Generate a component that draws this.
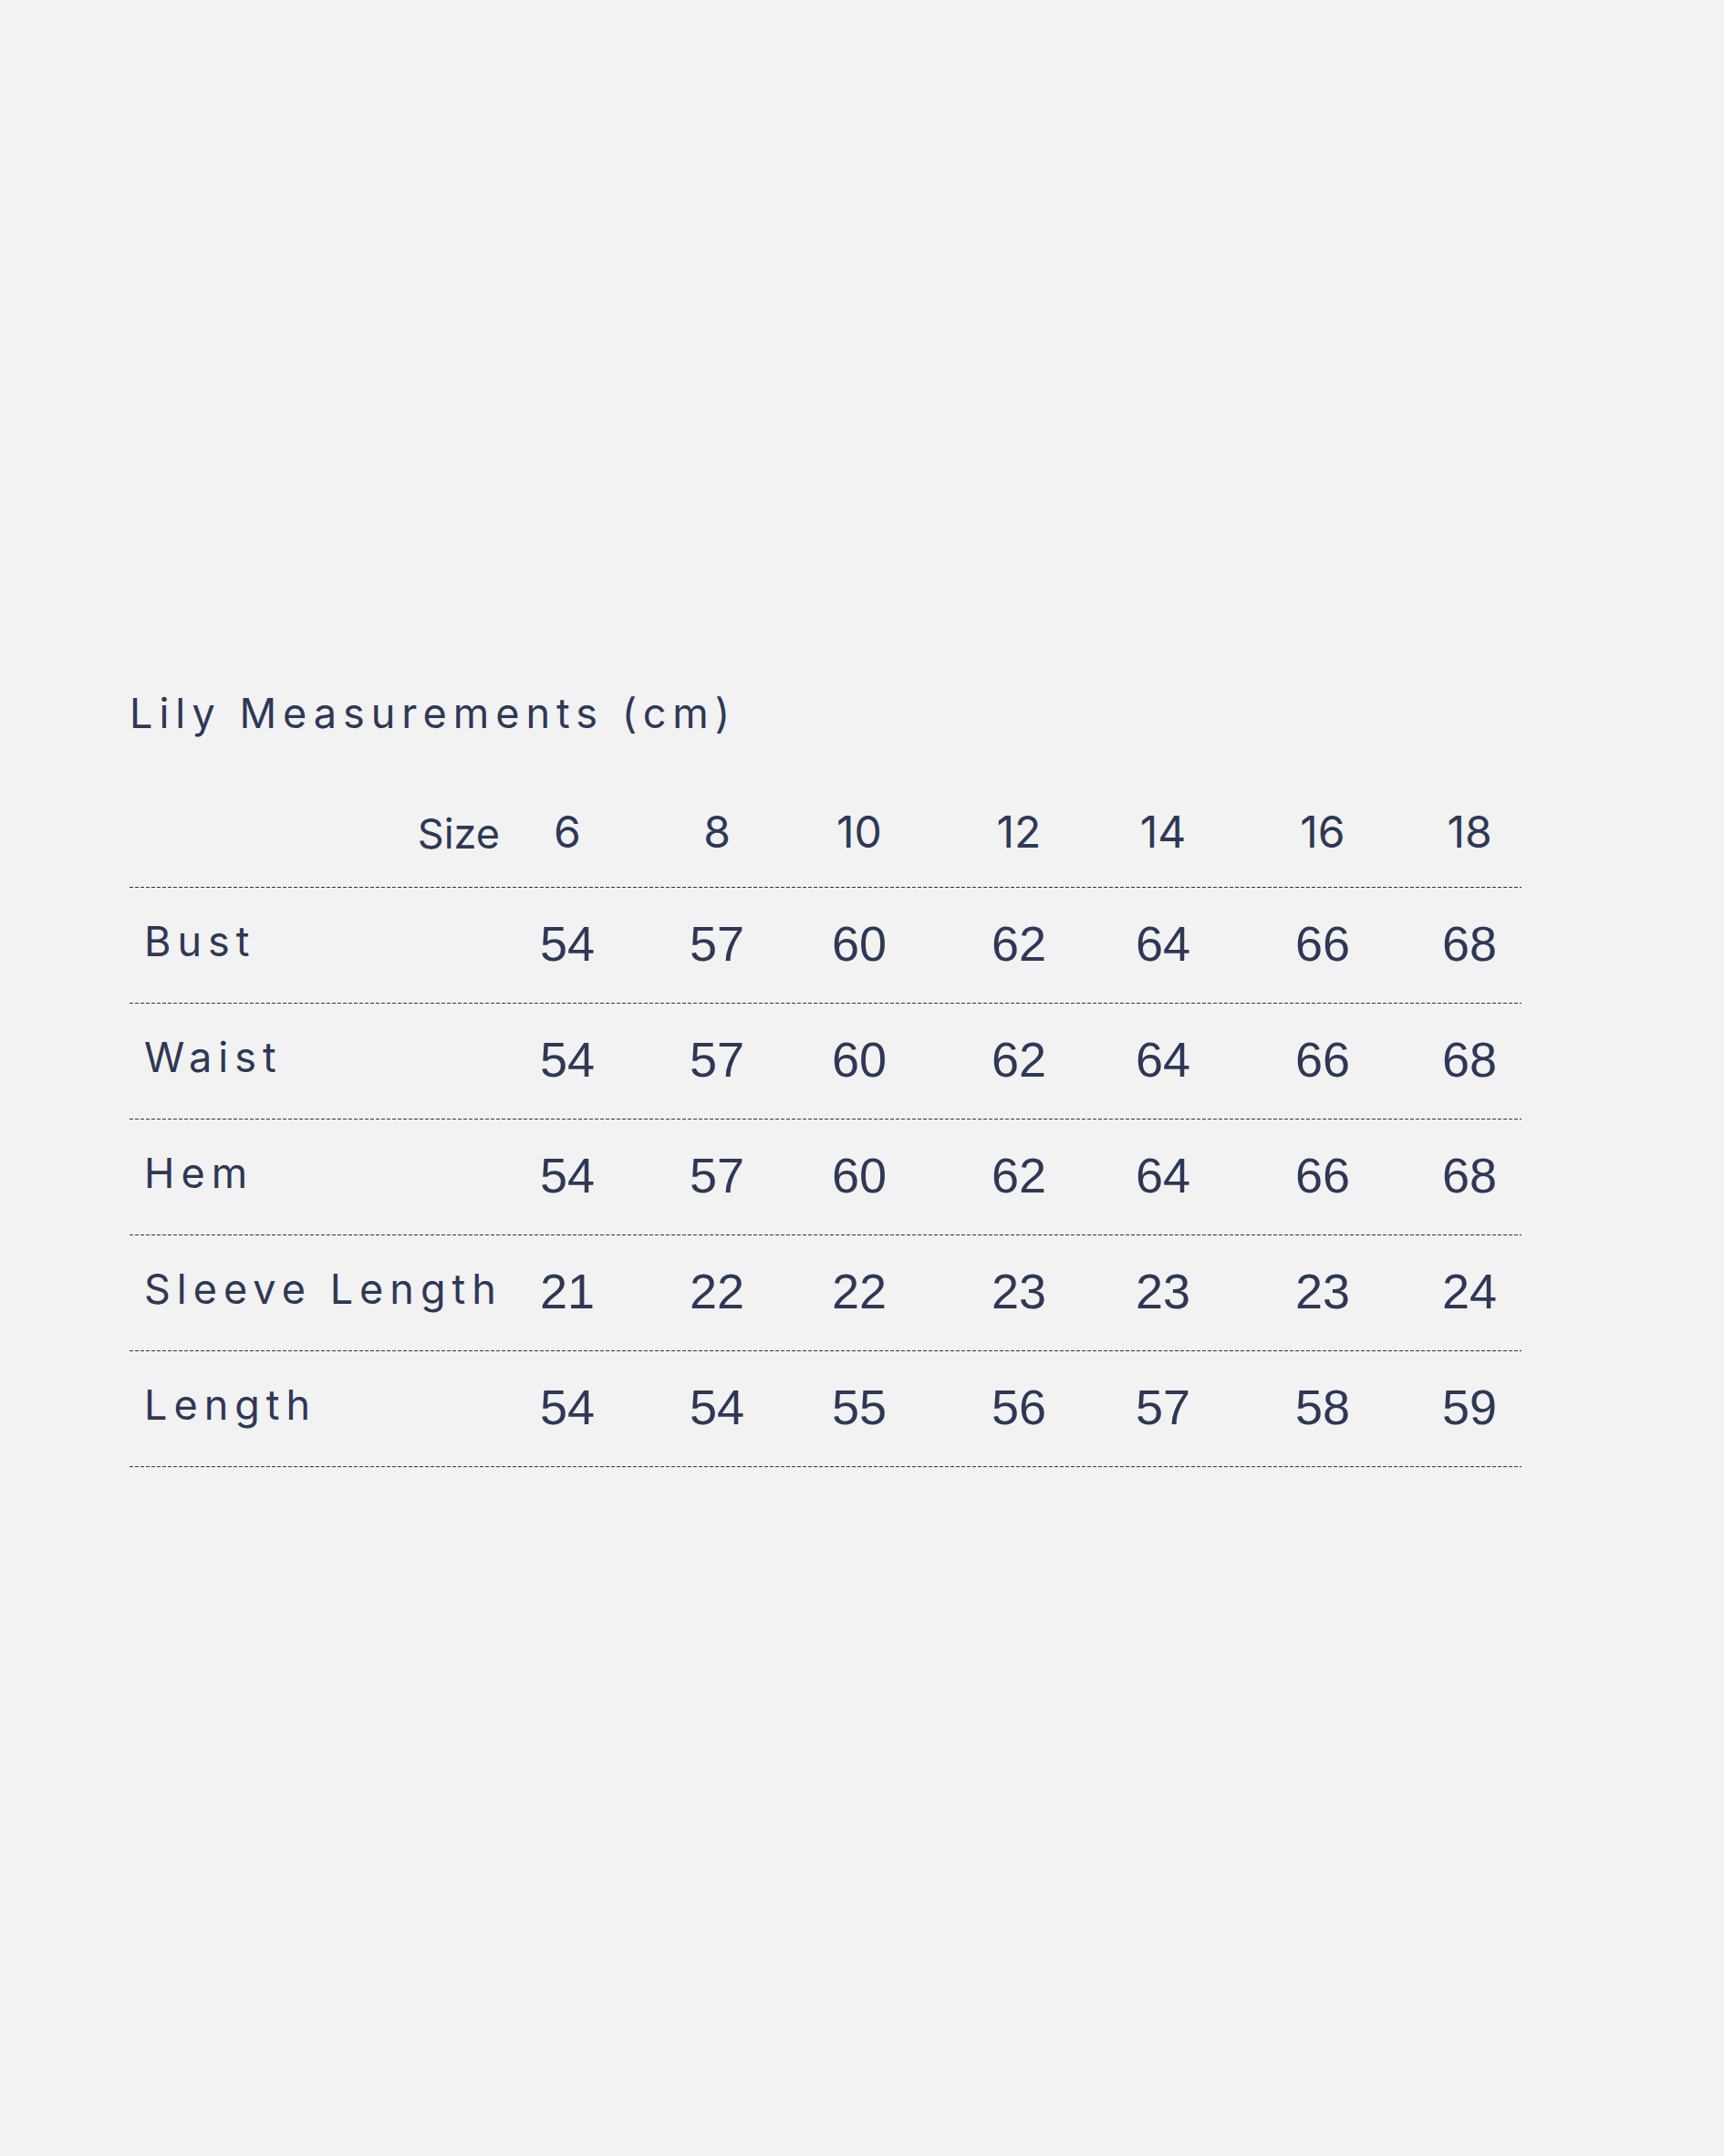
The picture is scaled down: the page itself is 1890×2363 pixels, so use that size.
const sizes = ['6', '8', '10', '12', '14', '16', '18'];

const rows = [
  { label: 'Bust', values: [54, 57, 60, 62, 64, 66, 68] },
  { label: 'Waist', values: [54, 57, 60, 62, 64, 66, 68] },
  { label: 'Hem', values: [54, 57, 60, 62, 64, 66, 68] },
  { label: 'Sleeve Length', values: [21, 22, 22, 23, 23, 23, 24] },
  { label: 'Length', values: [54, 54, 55, 56, 57, 58, 59] },
];

// column tracks line the numbers up under each size
const cols = 'grid grid-cols-[384px_192px_136px_176px_174px_142px_208px_114px]';
// 4px dash / 2px gap rule along the bottom of a row
const rule =
  'bg-[repeating-linear-gradient(90deg,#2e3856_0_4px,transparent_4px_6px)] bg-[length:100%_1px] bg-bottom bg-no-repeat';

export default function App() {
  return (
    <div className="min-h-screen w-full bg-[#f2f2f2] pt-[759px] pl-[142px] text-[#2e3856]">
      <div className="w-[1526px]">
        <h1 className="font-['Inter','Noto_Sans',sans-serif] text-[45px] leading-none font-normal tracking-[7px] whitespace-nowrap">
          Lily Measurements (cm)
        </h1>

        {/* Size header */}
        <div className={`${cols} ${rule} h-[169px] items-end pb-[37px] font-['Inter','Noto_Sans',sans-serif]`}>
          <div className="-mr-[22px] text-right text-[45px] leading-none">Size</div>
          {sizes.map(s => (
            <div key={s} className="text-center text-[48px] leading-none">
              {s}
            </div>
          ))}
        </div>

        {/* Measurements */}
        {rows.map(row => (
          <div key={row.label} className={`${cols} ${rule} h-[127px] items-center pb-[6px]`}>
            <div className="pl-[16px] pb-[5px] font-['Inter','Noto_Sans',sans-serif] text-[45px] leading-none tracking-[7px] whitespace-nowrap">
              {row.label}
            </div>
            {row.values.map((v, i) => (
              <div key={i} className="text-center font-['Liberation_Sans',Arial,sans-serif] text-[54px] leading-none">
                {v}
              </div>
            ))}
          </div>
        ))}
      </div>
    </div>
  );
}
